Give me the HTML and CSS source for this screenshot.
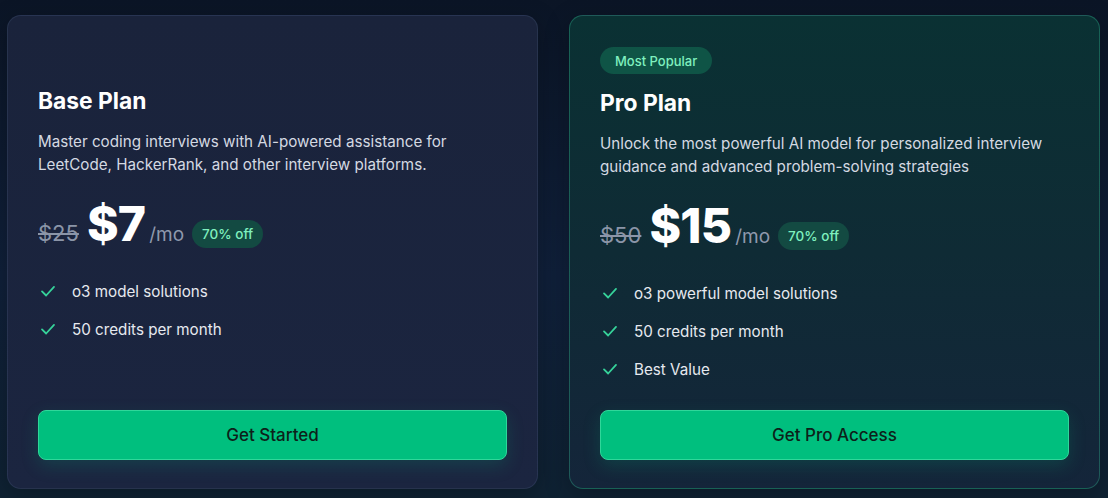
FILE: index.html
```html
<!DOCTYPE html>
<html>
<head>
<meta charset="utf-8">
<link rel="stylesheet" href="styles.css">
</head>
<body>
<main class="plans">
  <section class="card">
    <div class="card-body">
      <span class="popular hidden">Most Popular</span>
      <h2 class="title">Base Plan</h2>
      <p class="desc">Master coding interviews with AI-powered assistance for LeetCode, HackerRank, and other interview platforms.</p>
      <div class="price">
        <span class="old">$25</span>
        <span class="now">$7</span>
        <span class="per">/mo</span>
        <span class="off">70% off</span>
      </div>
      <ul class="features">
        <li><svg class="check" viewBox="0 0 24 24"><polyline points="4 12.5 9.5 18 20 6.5"/></svg>o3 model solutions</li>
        <li><svg class="check" viewBox="0 0 24 24"><polyline points="4 12.5 9.5 18 20 6.5"/></svg>50 credits per month</li>
      </ul>
    </div>
    <button class="cta">Get Started</button>
  </section>
  <section class="card pro">
    <div class="card-body">
      <span class="popular">Most Popular</span>
      <h2 class="title">Pro Plan</h2>
      <p class="desc">Unlock the most powerful AI model for personalized interview guidance and advanced problem-solving strategies</p>
      <div class="price">
        <span class="old">$50</span>
        <span class="now">$15</span>
        <span class="per">/mo</span>
        <span class="off">70% off</span>
      </div>
      <ul class="features">
        <li><svg class="check" viewBox="0 0 24 24"><polyline points="4 12.5 9.5 18 20 6.5"/></svg>o3 powerful model solutions</li>
        <li><svg class="check" viewBox="0 0 24 24"><polyline points="4 12.5 9.5 18 20 6.5"/></svg>50 credits per month</li>
        <li><svg class="check" viewBox="0 0 24 24"><polyline points="4 12.5 9.5 18 20 6.5"/></svg>Best Value</li>
      </ul>
    </div>
    <button class="cta">Get Pro Access</button>
  </section>
</main>
</body>
</html>
```

FILE: styles.css
```css
* { box-sizing: border-box; }

html, body {
  margin: 0;
  height: 100%;
}

body {
  background: linear-gradient(180deg, #0b1526 0%, #10203a 55%, #0f2233 100%);
  font-family: Inter, "Noto Sans", sans-serif;
  color: #fff;
}

.plans {
  display: grid;
  grid-template-columns: 531px 531px;
  column-gap: 31px;
  padding: 15px 8px 9px 7px;
  height: 100%;
}

.card {
  display: flex;
  flex-direction: column;
  border-radius: 14px;
  border: 1px solid rgba(120, 150, 190, 0.14);
  background: linear-gradient(180deg, #1a233b 0%, #1b2540 100%);
  padding: 30px 30px 28px 30px;
  box-shadow: 0 6px 24px rgba(0, 0, 0, 0.25);
}

.card.pro {
  border-color: rgba(52, 190, 150, 0.35);
  background: linear-gradient(180deg, #0a3133 0%, #0f2b35 50%, #14253a 100%);
  padding-top: 31px;
}

.card-body {
  flex: 1;
}

.popular {
  display: inline-flex;
  align-items: center;
  height: 27px;
  padding: 0 15px;
  border-radius: 14px;
  background: #0f5446;
  color: #7ff0bf;
  font-size: 13px;
  font-weight: 500;
}

.popular.hidden {
  visibility: hidden;
}

.title {
  margin: 15px 0 0 0;
  font-size: 22.8px;
  line-height: 28px;
  font-weight: 700;
  color: #fff;
}

.card:not(.pro) .title { margin-top: 14px; }

.desc {
  margin: 15px 0 0 0;
  font-size: 15.2px;
  line-height: 23px;
  color: #d4d9e2;
}

.price {
  display: flex;
  align-items: baseline;
  margin-top: 18px;
  height: 58px;
}

.old {
  font-size: 22px;
  color: #8b95a8;
  text-decoration: line-through;
  margin-right: 8px;
}

.now {
  font-size: 48px;
  font-weight: 800;
  color: #fff;
  letter-spacing: -0.8px;
  margin-right: 4px;
}

.per {
  font-size: 19px;
  color: #8f99ad;
  margin-right: 8px;
}

.off {
  display: inline-block;
  padding: 6px 10px;
  border-radius: 14px;
  background: #134a42;
  color: #7ff0bf;
  font-size: 13.5px;
  font-weight: 500;
  line-height: 16px;
  position: relative;
  top: -2px;
}

.features {
  list-style: none;
  margin: 28px 0 0 0;
  padding: 0;
}

.features li {
  display: flex;
  align-items: center;
  height: 22px;
  margin-bottom: 16px;
  font-size: 15.2px;
  color: #e6e9ef;
}

.check {
  width: 18px;
  height: 18px;
  margin: 0 15px 0 1px;
  fill: none;
  stroke: #36d39a;
  stroke-width: 2.4;
  stroke-linecap: round;
  stroke-linejoin: round;
}

.cta {
  display: block;
  width: 100%;
  height: 50px;
  border: 1px solid #2fd79a;
  border-radius: 8px;
  background: #00bf7e;
  color: #0d1f1a;
  font-family: Inter, "Noto Sans", sans-serif;
  font-size: 17px;
  font-weight: 500;
  box-shadow: 0 6px 18px rgba(0, 191, 126, 0.18);
}
```
